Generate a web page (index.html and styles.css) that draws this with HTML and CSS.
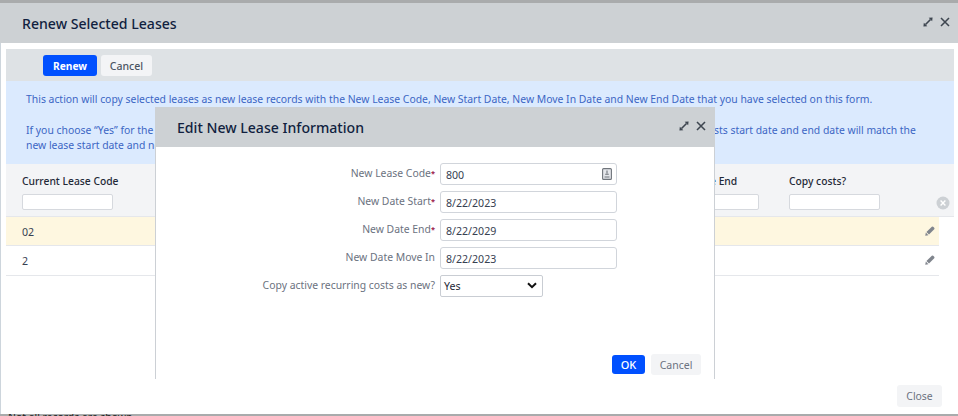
FILE: index.html
```html
<!DOCTYPE html>
<html lang="en">
<head>
<meta charset="utf-8">
<title>Renew Selected Leases</title>
<link rel="stylesheet" href="styles.css">
</head>
<body>
<div class="page-top"></div>
<section class="dialog">
  <header class="dialog-head outer-head">
    <h1 class="title">Renew Selected Leases</h1>
    <div class="head-icons">
      <svg class="icon" viewBox="0 0 12 12"><path class="arrow" d="M0.5 11.5 L1 6.8 L5.2 11 Z M11.5 0.5 L6.8 1 L11 5.2 Z"/><path class="line" d="M3 9 L9 3"/></svg>
      <svg class="icon" viewBox="0 0 12 12"><path class="line" d="M1.2 1.2 L10.8 10.8 M10.8 1.2 L1.2 10.8"/></svg>
    </div>
  </header>
  <div class="dialog-body">
    <div class="toolbar">
      <button class="btn primary">Renew</button>
      <button class="btn secondary">Cancel</button>
    </div>
    <div class="info">
      <p>This action will copy selected leases as new lease records with the New Lease Code, New Start Date, New Move In Date and New End Date that you have selected on this form.</p>
      <p>If you choose “Yes” for the Copy active recurring costs as new? option, the active recurring costs will be copied as new recurring costs. New costs start date and end date will match the new lease start date and new lease end date.</p>
    </div>
    <div class="grid-head">
      <div class="col"><span>Current Lease Code</span><input class="filter"></div>
      <div class="col"><span>Date End</span><input class="filter"></div>
      <div class="col"><span>New Lease Code</span><input class="filter"></div>
      <div class="col"><span>New Date Start</span><input class="filter"></div>
      <div class="col"><span>New Date Move In</span><input class="filter"></div>
      <div class="col"><span>New Date End</span><input class="filter"></div>
      <div class="col"><span>Copy costs?</span><input class="filter"></div>
      <svg class="clear" viewBox="0 0 14 14"><circle cx="7" cy="7" r="6.5"/><path d="M4.6 4.6 L9.4 9.4 M9.4 4.6 L4.6 9.4"/></svg>
    </div>
    <div class="row highlight"><span>02</span>
      <svg class="pencil" viewBox="0 0 12 12"><path d="M0.3 11.7 L1 7.9 L4.1 11 Z M1.7 7.2 L8.2 0.9 Q9 0.2 9.8 0.9 L11.1 2.2 Q11.8 3 11.1 3.8 L4.8 10.3 Z"/></svg>
    </div>
    <div class="row"><span>2</span>
      <svg class="pencil" viewBox="0 0 12 12"><path d="M0.3 11.7 L1 7.9 L4.1 11 Z M1.7 7.2 L8.2 0.9 Q9 0.2 9.8 0.9 L11.1 2.2 Q11.8 3 11.1 3.8 L4.8 10.3 Z"/></svg>
    </div>
    <div class="spacer"></div>
    <div class="dialog-foot"><button class="btn close">Close</button></div>
  </div>
</section>
<div class="page-bottom">Not all records are shown.</div>

<section class="inner">
  <header class="dialog-head inner-head">
    <h2 class="title">Edit New Lease Information</h2>
    <div class="head-icons">
      <svg class="icon" viewBox="0 0 12 12"><path class="arrow" d="M0.5 11.5 L1 6.8 L5.2 11 Z M11.5 0.5 L6.8 1 L11 5.2 Z"/><path class="line" d="M3 9 L9 3"/></svg>
      <svg class="icon" viewBox="0 0 12 12"><path class="line" d="M1.2 1.2 L10.8 10.8 M10.8 1.2 L1.2 10.8"/></svg>
    </div>
  </header>
  <form class="form">
    <label class="field"><span class="lab">New Lease Code<b>*</b></span>
      <span class="input-wrap"><input class="text" value="800">
        <svg class="code-ico" viewBox="0 0 10 12"><rect class="code-box" x="0.6" y="0.6" width="8.8" height="10.8" rx="1"/><path d="M5 2.5 V5.5 M3.2 6.2 H6.8 M2.5 9 H7.5"/></svg>
      </span></label>
    <label class="field"><span class="lab">New Date Start<b>*</b></span><input class="text" value="8/22/2023"></label>
    <label class="field"><span class="lab">New Date End<b>*</b></span><input class="text" value="8/22/2029"></label>
    <label class="field"><span class="lab">New Date Move In</span><input class="text" value="8/22/2023"></label>
    <label class="field"><span class="lab">Copy active recurring costs as new?</span>
      <span class="select"><span>Yes</span>
        <svg class="chev" viewBox="0 0 10 7"><path d="M1 1.2 L5 5.2 L9 1.2"/></svg>
      </span></label>
  </form>
  <div class="inner-foot">
    <button class="btn primary ok">OK</button>
    <button class="btn plain">Cancel</button>
  </div>
</section>
</body>
</html>
```

FILE: styles.css
```css
* { box-sizing: border-box; }
html, body { margin: 0; padding: 0; }
body {
  width: 958px;
  height: 416px;
  overflow: hidden;
  position: relative;
  background: #fff;
  font-family: "Noto Sans", sans-serif;
  font-size: 10.4px;
  color: #374151;
}
.page-top { height: 3px; background: #a9abac; }
.page-bottom {
  height: 2px;
  overflow: hidden;
  background: #a9abac;
  padding-left: 8px;
  font-size: 10.4px;
  line-height: 7px;
  color: #222;
}
.dialog {
  height: 411px;
  display: flex;
  flex-direction: column;
  border-left: 1px solid #cdd5dc;
}
.dialog-head {
  flex: none;
  height: 40px;
  background: #cdd1d4;
  display: flex;
  align-items: center;
  justify-content: space-between;
}
.outer-head { padding: 0 8px 0 22px; margin-left: -1px; }
.title {
  margin: 0;
  font-size: 14.1px;
  font-weight: 500;
  color: #111f3f;
}
.head-icons { display: flex; align-items: center; gap: 7px; margin-top: -3px; }
.icon { width: 10px; height: 10px; display: block; }
.icon .arrow { fill: #3e4650; }
.icon .line { fill: none; stroke: #3e4650; stroke-width: 1.9; }
.dialog-body {
  flex: 1;
  display: flex;
  flex-direction: column;
  padding: 6px 4px 0 5px;
  min-height: 0;
}
.toolbar {
  flex: none;
  height: 32px;
  background: #dee2e5;
  display: flex;
  align-items: center;
  gap: 4px;
  padding: 1px 0 0 37px;
}
.btn {
  font: 500 10.5px "Noto Sans", sans-serif;
  height: 21px;
  padding: 0;
  border: 0;
  border-radius: 3px;
  background: #f3f4f6;
  color: #4b5563;
}
.btn.primary { background: #0050ff; color: #fff; font-weight: 700; width: 54px; font-size: 10.2px; }
.btn.secondary { width: 51px; }
.info {
  flex: none;
  height: 83px;
  background: #dbeafe;
  color: #3b66c4;
  padding: 11px 20px 0 20px;
  font-size: 10.4px;
  line-height: 15.3px;
}
.info p { margin: 0 0 15.3px; }
.grid-head {
  flex: none;
  height: 53px;
  background: #f3f4f6;
  border-bottom: 1px solid #e5e7eb;
  display: grid;
  grid-template-columns: 162px repeat(5, 121px) 121px;
  padding: 9px 0 0 16px;
  position: relative;
}
.col { display: flex; flex-direction: column; gap: 5px; }
.col span { font-size: 10.3px; font-weight: 500; color: #1f2937; line-height: 16px; white-space: nowrap; }
.filter {
  width: 91px;
  height: 16px;
  border: 1px solid #d6d9de;
  border-radius: 2px;
  background: #fff;
  padding: 0;
}
.clear { position: absolute; right: 4px; top: 32px; width: 14px; height: 14px; }
.clear circle { fill: #ccd0d4; }
.clear path { stroke: #fff; stroke-width: 1.4; fill: none; }
.row {
  flex: none;
  width: 933px;
  height: 29px;
  border-bottom: 1px solid #e5e7eb;
  display: flex;
  align-items: center;
  justify-content: space-between;
  padding: 1px 4px 0 16px;
  font-size: 10.6px;
}
.row + .row { height: 30px; }
.row.highlight { background: #fef7e0; }
.pencil { width: 10px; height: 10px; fill: #80858d; margin-top: -2px; }
.spacer { flex: 1; }
.dialog-foot {
  flex: none;
  display: flex;
  justify-content: flex-end;
  padding: 0 12px 7px 0;
}
.btn.close { height: 22px; width: 45px; font-weight: 400; font-size: 10.4px; color: #6b7280; }
.inner {
  position: absolute;
  left: 155px;
  top: 107px;
  width: 560px;
  height: 272px;
  background: #fff;
  border-left: 1px solid #ccd0d5;
  border-right: 1px solid #ccd0d5;
  display: flex;
  flex-direction: column;
}
.inner-head { margin: 0 -1px; padding: 0 9px 0 22px; }
.form {
  display: flex;
  flex-direction: column;
  gap: 6px;
  padding-top: 16px;
}
.field { display: flex; align-items: center; height: 22px; }
.lab {
  width: 279px;
  text-align: right;
  color: #6b7280;
  font-size: 10.4px;
  margin-top: -2px;
  white-space: nowrap;
}
.lab b { color: #9b1c4a; font-weight: 700; font-size: 7.5px; vertical-align: 1px; line-height: 0; }
.text, .input-wrap { width: 177px; margin-left: 5px; height: 22px; }
.input-wrap { position: relative; display: block; }
.input-wrap .text { margin: 0; }
.text {
  display: block;
  border: 1px solid #d1d5db;
  border-radius: 3px;
  padding: 1px 5px 0;
  font: 10.6px "Noto Sans", sans-serif;
  color: #374151;
  background: #fff;
}
.code-ico {
  position: absolute;
  right: 5px;
  top: 5px;
  width: 10px;
  height: 12px;
  fill: none;
  stroke: #6f747b;
  stroke-width: 1.1;
}
.code-box { fill: #e5e7eb; }
.select {
  margin-left: 5px;
  width: 103px;
  height: 22px;
  border: 1px solid #c9cdd3;
  border-radius: 2px;
  display: flex;
  align-items: center;
  justify-content: space-between;
  padding: 0 5px 0 3px;
  font-size: 10.6px;
  color: #1f2937;
}
.chev { width: 10px; height: 7px; fill: none; stroke: #111; stroke-width: 2; margin-top: -1px; }
.inner-foot {
  margin-top: auto;
  display: flex;
  justify-content: flex-end;
  align-items: center;
  gap: 6px;
  padding: 0 13px 4px 0;
}
.btn.ok { width: 33px; height: 19px; font-weight: 500; font-size: 11px; }
.btn.plain { width: 50px; height: 21px; font-weight: 400; color: #6b7280; }
```
